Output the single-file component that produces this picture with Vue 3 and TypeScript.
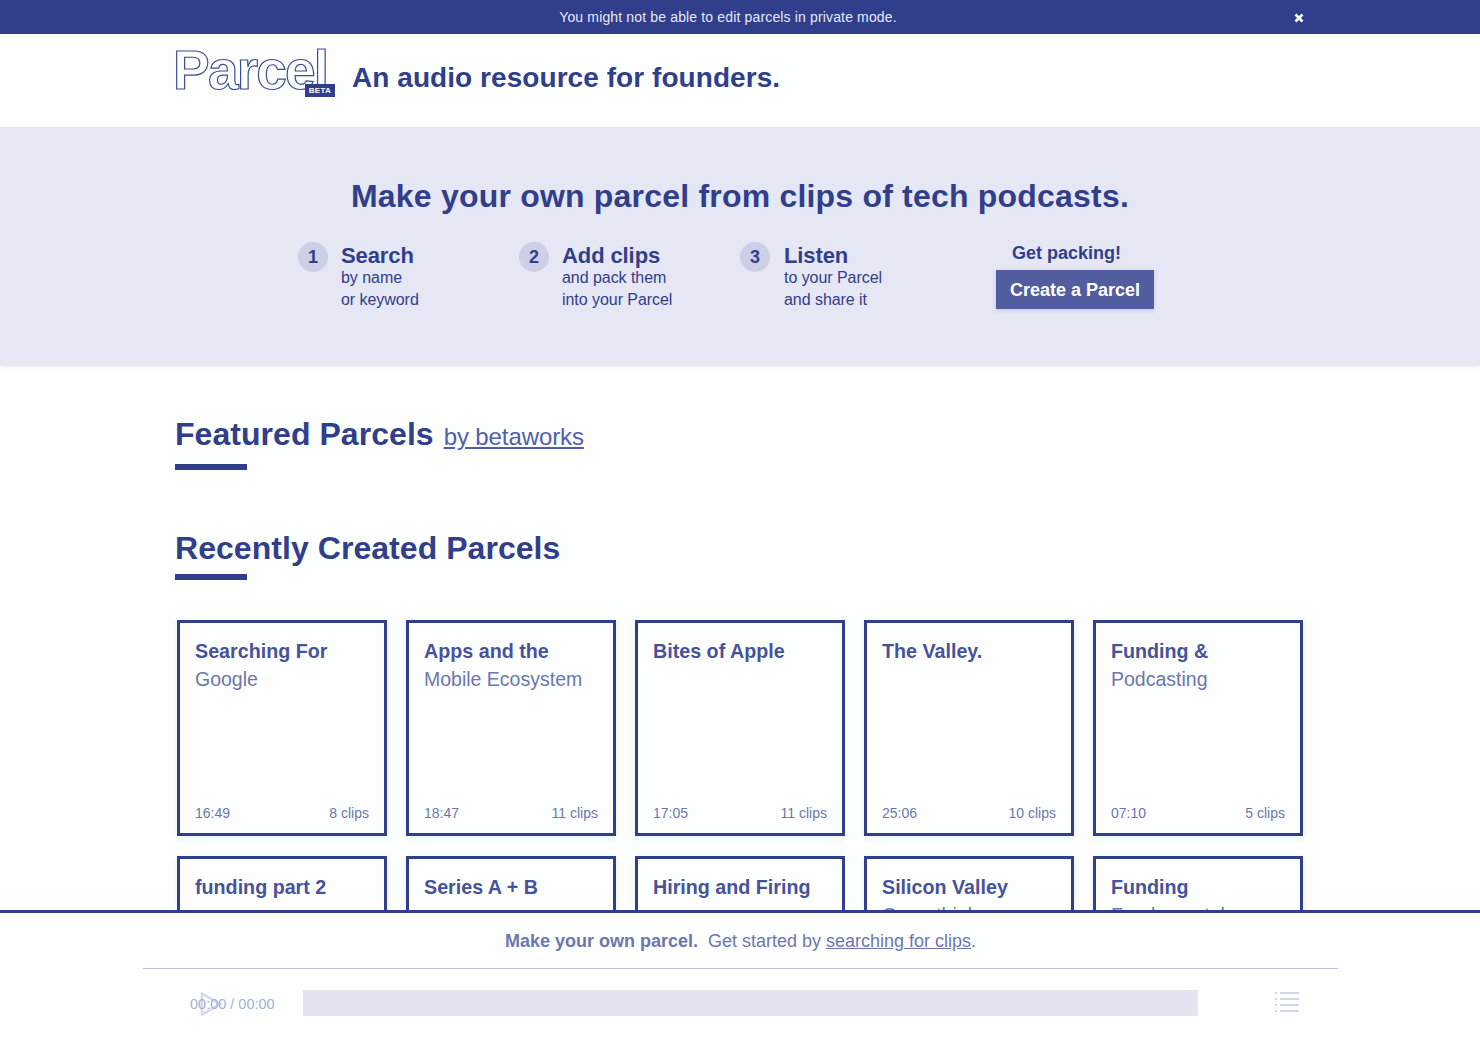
<template>
  <div class="page">
    <div class="notice">
      <span class="notice-text">You might not be able to edit parcels in private mode.</span>
      <svg class="notice-close" width="10" height="10" viewBox="0 0 10 10">
        <path d="M1.5 1.5 8.5 8.5M8.5 1.5 1.5 8.5" stroke="#fff" stroke-width="2.6" />
      </svg>
    </div>

    <header class="header">
      <div class="logo">
        <span class="logo-word">Parcel</span>
        <span class="beta">BETA</span>
      </div>
      <div class="tagline">An audio resource for founders.</div>
    </header>

    <section class="hero">
      <h1>Make your own parcel from clips of tech podcasts.</h1>
      <div class="steps">
        <div v-for="step in steps" :key="step.num" class="step">
          <div class="step-num">{{ step.num }}</div>
          <div>
            <div class="step-title">{{ step.title }}</div>
            <div class="step-desc">{{ step.line1 }}</div>
            <div class="step-desc">{{ step.line2 }}</div>
          </div>
        </div>
        <div class="cta">
          <div class="cta-label">Get packing!</div>
          <button class="cta-button">Create a Parcel</button>
        </div>
      </div>
    </section>

    <main class="content">
      <h2 class="section-title">Featured Parcels <a class="by">by betaworks</a></h2>
      <div class="rule"></div>
      <h2 class="section-title recent">Recently Created Parcels</h2>
      <div class="rule rule-recent"></div>
      <div class="grid">
        <div v-for="p in parcels" :key="p.title" class="card">
          <div class="card-title">{{ p.title }}</div>
          <div class="card-sub">{{ p.sub }}</div>
          <div v-if="p.time" class="card-meta">
            <span>{{ p.time }}</span>
            <span>{{ p.clips }}</span>
          </div>
        </div>
      </div>
    </main>

    <footer class="player">
      <div class="prompt">
        <b>Make your own parcel.</b>&nbsp; Get started by <a>searching for clips</a>.
      </div>
      <div class="controls">
        <div class="time-wrap">
          <svg class="play" width="22" height="24" viewBox="0 0 22 24">
            <path d="M2 1.5 20 12 2 22.5Z" fill="none" stroke="#d3d8ea" stroke-width="2.5" />
          </svg>
          <span class="time">00:00 / 00:00</span>
        </div>
        <div class="track"></div>
        <svg class="list" width="24" height="20" viewBox="0 0 24 20">
          <g fill="#d3d8e8">
            <rect v-for="y in listRows" :key="'d' + y" x="0" :y="y" width="2" height="2" />
            <rect v-for="y in listRows" :key="'l' + y" x="5" :y="y" width="19" height="2" />
          </g>
        </svg>
      </div>
    </footer>
  </div>
</template>

<script setup lang="ts">
interface Parcel {
  title: string
  sub: string
  time?: string
  clips?: string
}

const steps = [
  { num: 1, title: 'Search', line1: 'by name', line2: 'or keyword' },
  { num: 2, title: 'Add clips', line1: 'and pack them', line2: 'into your Parcel' },
  { num: 3, title: 'Listen', line1: 'to your Parcel', line2: 'and share it' }
]

const listRows = [0, 6, 12, 18]

// second row runs under the player bar, only the titles show
const parcels: Parcel[] = [
  { title: 'Searching For', sub: 'Google', time: '16:49', clips: '8 clips' },
  { title: 'Apps and the', sub: 'Mobile Ecosystem', time: '18:47', clips: '11 clips' },
  { title: 'Bites of Apple', sub: '', time: '17:05', clips: '11 clips' },
  { title: 'The Valley.', sub: '', time: '25:06', clips: '10 clips' },
  { title: 'Funding &', sub: 'Podcasting', time: '07:10', clips: '5 clips' },
  { title: 'funding part 2', sub: '' },
  { title: 'Series A + B', sub: '' },
  { title: 'Hiring and Firing', sub: '' },
  { title: 'Silicon Valley', sub: 'Groupthink' },
  { title: 'Funding', sub: 'Fundamentals' }
]
</script>

<style>
html,
body {
  margin: 0;
  background: #fcfffe;
}
</style>

<style scoped>
.page {
  height: 100vh;
  overflow: hidden;
  font-family: "Liberation Sans", Arial, sans-serif;
  color: #303e8c;
  background: #fcfffe;
}

.notice {
  height: 34px;
  background: #303e8c;
  color: #e6e8f5;
  font-size: 14px;
  letter-spacing: 0.15px;
  display: flex;
  align-items: center;
  justify-content: center;
  position: relative;
}

.notice-text {
  margin-left: -24px;
}

.notice-close {
  position: absolute;
  left: 1294px;
  top: 13px;
}

.header {
  height: 93px;
  box-sizing: border-box;
  padding: 14px 0 0 175px;
  display: flex;
  align-items: flex-start;
}

.logo {
  position: relative;
  width: 160px;
  height: 49px;
  margin-right: 17px;
}

.logo-word {
  position: absolute;
  left: -2px;
  top: -10px;
  font-size: 55px;
  line-height: 64px;
  font-weight: 700;
  letter-spacing: -1.8px;
  color: #fcfffe;
  -webkit-text-stroke: 1.2px #3f4c98;
}

.beta {
  position: absolute;
  right: 0;
  bottom: 0;
  width: 30px;
  height: 13px;
  background: #303e8c;
  color: #fff;
  font-size: 8px;
  line-height: 13px;
  font-weight: 700;
  text-align: center;
  letter-spacing: 0.3px;
}

.tagline {
  margin-top: 13px;
  font-size: 28px;
  line-height: 34px;
  font-weight: 700;
  letter-spacing: 0.06px;
}

.hero {
  height: 239px;
  background: #e6e7f4;
  box-shadow: 0 1px 4px rgba(48, 62, 140, 0.08);
  box-sizing: border-box;
  padding-top: 49px;
}

.hero h1 {
  margin: 0;
  font-size: 32px;
  line-height: 40px;
  font-weight: 700;
  letter-spacing: 0.2px;
  text-align: center;
}

.steps {
  margin-top: 26px;
  margin-left: 298px;
  display: flex;
}

.step {
  width: 221px;
  display: flex;
  gap: 13px;
}

.step:nth-child(3) {
  gap: 14px;
}

.step-num {
  width: 30px;
  height: 30px;
  border-radius: 50%;
  background: #cdcfe6;
  font-size: 18px;
  font-weight: 700;
  line-height: 30px;
  text-align: center;
  flex: none;
}

.step-title {
  padding-top: 2px;
  margin-bottom: -1px;
  font-size: 22px;
  line-height: 24px;
  font-weight: 700;
  letter-spacing: -0.1px;
}

.step-desc {
  font-size: 16px;
  line-height: 22px;
  letter-spacing: -0.05px;
}

.cta {
  margin-left: 35px;
  margin-top: -1px;
}

.cta-label {
  font-size: 18px;
  line-height: 24px;
  font-weight: 700;
  margin: 0 0 5px 16px;
}

.cta-button {
  display: block;
  width: 158px;
  height: 39px;
  padding: 2px 0 0;
  border: none;
  background: #525d9f;
  color: #fff;
  font-family: inherit;
  font-size: 18px;
  font-weight: 700;
  box-shadow: 0 1px 4px rgba(48, 62, 140, 0.2);
}

.content {
  padding: 0 177px 0 175px;
}

.section-title {
  margin: 0;
  padding-top: 47px;
  font-size: 32px;
  line-height: 42px;
  font-weight: 700;
  letter-spacing: 0.05px;
}

.section-title.recent {
  padding-top: 57px;
}

.by {
  font-size: 24px;
  font-weight: 400;
  letter-spacing: -0.1px;
  color: #525dae;
  text-decoration: underline;
  margin-left: 1px;
}

.rule {
  width: 72px;
  height: 6px;
  margin-top: 6px;
  background: #303e8c;
}

.rule-recent {
  margin-top: 5px;
}

.grid {
  margin: 40px 0 0 2px;
  display: grid;
  grid-template-columns: repeat(5, 210px);
  grid-auto-rows: 216px;
  gap: 20px 19px;
}

.card {
  border: 3px solid #303e8c;
  box-sizing: border-box;
  padding: 14px 15px 12px;
  display: flex;
  flex-direction: column;
  box-shadow: 0 2px 6px rgba(48, 62, 140, 0.08);
}

.card-title {
  font-size: 19.7px;
  line-height: 28px;
  font-weight: 700;
  color: #47529b;
}

.card-sub {
  font-size: 19.5px;
  line-height: 28px;
  color: #6d76ae;
}

.card-meta {
  margin-top: auto;
  display: flex;
  justify-content: space-between;
  font-size: 14px;
  line-height: 16px;
  color: #6d76ae;
}

.player {
  position: fixed;
  left: 0;
  right: 0;
  bottom: 0;
  height: 127px;
  box-sizing: border-box;
  border-top: 3px solid #303e8c;
  background: #fcfffe;
}

.prompt {
  height: 56px;
  margin: 0 142px 0 143px;
  border-bottom: 1px solid #bcc0dd;
  box-sizing: border-box;
  padding-top: 17px;
  font-size: 18px;
  line-height: 22px;
  text-align: center;
  color: #6d76ae;
}

.prompt a {
  text-decoration: underline;
}

.controls {
  height: 67px;
  padding-left: 190px;
  display: flex;
  align-items: center;
}

.time-wrap {
  position: relative;
  width: 113px;
}

.play {
  position: absolute;
  left: 10px;
  top: -2px;
}

.time {
  position: relative;
  top: 1px;
  font-size: 14.5px;
  line-height: 18px;
  color: #a9b0d6;
  display: block;
}

.track {
  width: 895px;
  height: 26px;
  background: #e2e5ef;
}

.list {
  margin-left: 77px;
  margin-top: -1px;
}
</style>
